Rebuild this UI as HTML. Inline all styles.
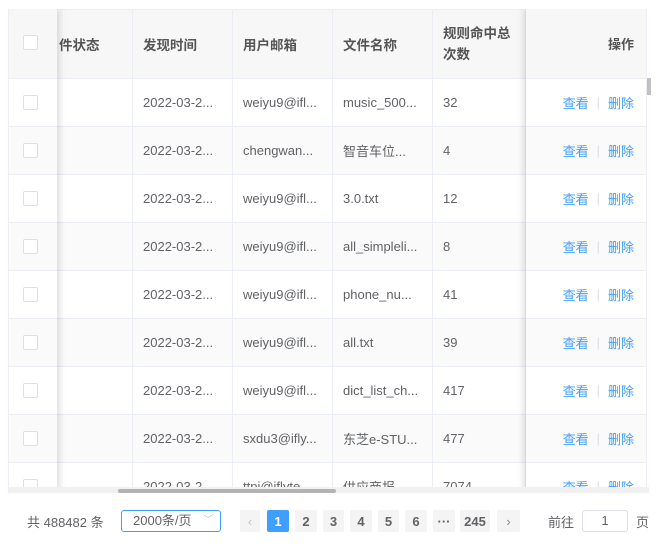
<!DOCTYPE html>
<html><head><meta charset="utf-8"><style>
*{box-sizing:border-box;margin:0;padding:0}
body{width:657px;height:545px;background:#fff;font-family:"Liberation Sans","Noto Sans CJK SC",sans-serif;font-size:13px;color:#606266;position:relative;overflow:hidden}
.wrap{position:absolute;left:8px;top:9px;width:649px;height:484px;overflow:hidden;border-left:1px solid #ebeef5}
.row{position:absolute;left:0;width:640px;height:48px;border-bottom:1px solid #ebeef5;background:#fff}
.row.s{background:#fafafa}
.hd{position:absolute;left:0;top:0;width:640px;height:70px;background:#f7f7f8;border-bottom:1px solid #ebeef5;border-top:1px solid #ebeef5}
.c{position:absolute;top:0;height:100%;border-right:1px solid #ebeef5;display:flex;align-items:center;padding-left:10px;white-space:nowrap;overflow:hidden}
.hd .c{font-weight:bold;color:#555;font-size:13.5px}
.cb{position:absolute;left:14px;width:15px;height:15px;border:1px solid #dcdfe6;border-radius:2px;background:#fff}
.fl{position:absolute;left:0;top:0;width:48px;height:484px;box-shadow:3px 0 6px rgba(0,0,0,.12);}
.fr{position:absolute;left:517px;top:0;width:120px;height:484px;box-shadow:-3px 0 6px rgba(0,0,0,.12)}
a{color:#409eff;text-decoration:none}
.pg{position:absolute;top:510px;height:22px;border-radius:2px;background:#f4f4f5;color:#606266;font-weight:bold;font-size:13px;display:flex;align-items:center;justify-content:center}
</style></head><body>
<div class="wrap">
<div class="hd">
<div class="c" style="left:48px;width:76px;padding-left:2px">件状态</div>
<div class="c" style="left:124px;width:100px">发现时间</div>
<div class="c" style="left:224px;width:100px">用户邮箱</div>
<div class="c" style="left:324px;width:100px">文件名称</div>
<div class="c" style="left:424px;width:93px;white-space:normal;line-height:21px;padding-right:8px">规则命中总次数</div>
</div>
<div id="rows"></div>
<div class="fl" id="fl"></div>
<div class="fr" id="fr"></div>
<div style="position:absolute;left:637px;top:0;width:12px;height:484px;background:#fff;border-left:1px solid #ebeef5"></div>
<div style="position:absolute;left:638px;top:69px;width:4px;height:17px;background:#c1c1c1"></div>
<div style="position:absolute;left:0;top:478px;width:640px;height:6px;background:#f1f1f1"></div>
<div style="position:absolute;left:109px;top:480px;width:218px;height:4px;background:#b4b4b4;border-radius:2px"></div>
</div>
<div style="position:absolute;left:27px;top:512px">共 488482 条</div>
<div style="position:absolute;left:121px;top:510px;width:100px;height:22px;border:1px solid #409eff;border-radius:3px;padding-left:11px;line-height:20px">2000条/页<span style="position:absolute;right:7px;top:0;color:#c0c4cc;font-size:10px">﹀</span></div>
<div class="pg" style="left:240px;width:20px;color:#c0c4cc;font-weight:normal">‹</div>
<div class="pg" style="left:267px;width:22px;background:#409eff;color:#fff">1</div>
<div class="pg" style="left:295px;width:22px">2</div>
<div class="pg" style="left:323px;width:21px">3</div>
<div class="pg" style="left:350px;width:22px">4</div>
<div class="pg" style="left:378px;width:21px">5</div>
<div class="pg" style="left:405px;width:22px">6</div>
<div class="pg" style="left:433px;width:22px">···</div>
<div class="pg" style="left:460px;width:30px">245</div>
<div class="pg" style="left:497px;width:23px;font-weight:normal;color:#888">›</div>
<div style="position:absolute;left:548px;top:512px">前往</div>
<div style="position:absolute;left:582px;top:510px;width:46px;height:22px;border:1px solid #dcdfe6;border-radius:3px;text-align:center;line-height:20px">1</div>
<div style="position:absolute;left:636px;top:512px">页</div>
<script>
var d=[["music_500...","32","weiyu9@ifl..."],["智音车位...","4","chengwan..."],["3.0.txt","12","weiyu9@ifl..."],["all_simpleli...","8","weiyu9@ifl..."],["phone_nu...","41","weiyu9@ifl..."],["all.txt","39","weiyu9@ifl..."],["dict_list_ch...","417","weiyu9@ifl..."],["东芝e-STU...","477","sxdu3@ifly..."],["供应商报","7074","ttpi@iflyte"]];
var h="",l="",r="";
d.forEach(function(x,i){var t=70+i*48,s=i%2?" s":"";
h+='<div class="row'+s+'" style="top:'+t+'px"><div class="c" style="left:48px;width:76px"></div><div class="c" style="left:124px;width:100px">2022-03-2...</div><div class="c" style="left:224px;width:100px">'+x[2]+'</div><div class="c" style="left:324px;width:100px">'+x[0]+'</div><div class="c" style="left:424px;width:93px">'+x[1]+'</div></div>';
l+='<div class="row'+s+'" style="top:'+t+'px;width:48px"><div class="cb" style="top:16px"></div></div>';
r+='<div class="row'+s+'" style="top:'+t+'px;width:120px;display:flex;align-items:center;justify-content:flex-end;padding-right:12px"><a>查看</a><span style="color:#dcdfe6;margin:0 8px">|</span><a>删除</a></div>';});
document.getElementById("rows").innerHTML=h;
document.getElementById("fl").innerHTML='<div class="row" style="top:0;width:48px;height:70px;background:#f7f7f8"><div class="cb" style="top:26px"></div></div>'+l;
document.getElementById("fr").innerHTML='<div class="row" style="top:0;width:120px;height:70px;background:#f7f7f8;display:flex;align-items:center;justify-content:flex-end;padding-right:12px;font-weight:bold;color:#555">操作</div>'+r;
</script>
</body></html>
